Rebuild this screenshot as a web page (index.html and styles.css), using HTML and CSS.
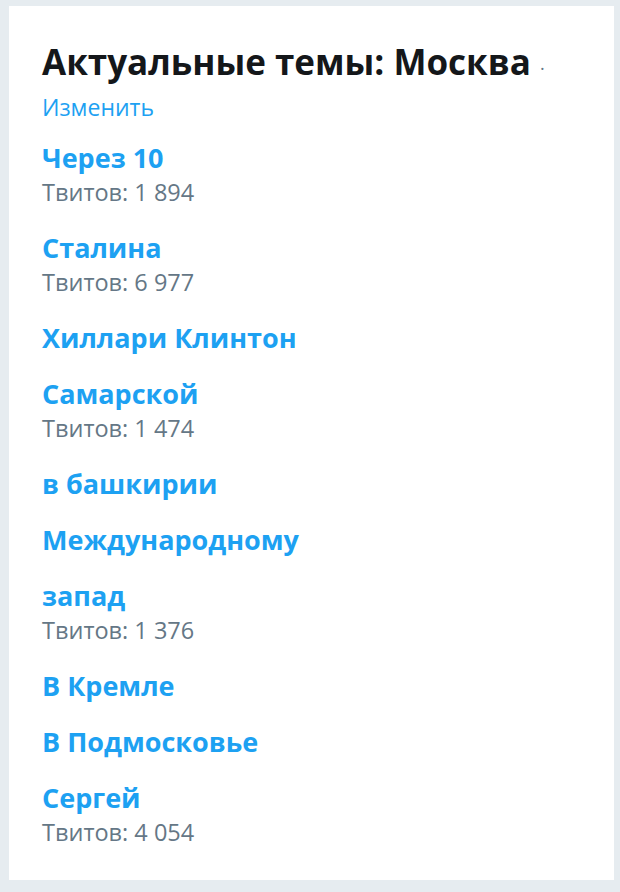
FILE: index.html
```html
<!DOCTYPE html>
<html>
<head>
    <title>Актуальные темы</title>
    <link rel="stylesheet" href="styles.css">
</head>
<body>
    <div class="trends">
        <div class="trends-header">
            <h3 class="trends-title">Актуальные темы: Москва <span class="dot">·</span></h3>
            <a class="change-link" href="#">Изменить</a>
        </div>
        <ul class="trend-list">
            <li class="trend">
                <a class="trend-name" href="#">Через 10</a>
                <div class="trend-count">Твитов: 1 894</div>
            </li>
            <li class="trend">
                <a class="trend-name" href="#">Сталина</a>
                <div class="trend-count">Твитов: 6 977</div>
            </li>
            <li class="trend">
                <a class="trend-name" href="#">Хиллари Клинтон</a>
            </li>
            <li class="trend">
                <a class="trend-name" href="#">Самарской</a>
                <div class="trend-count">Твитов: 1 474</div>
            </li>
            <li class="trend">
                <a class="trend-name" href="#">в башкирии</a>
            </li>
            <li class="trend">
                <a class="trend-name" href="#">Международному</a>
            </li>
            <li class="trend">
                <a class="trend-name" href="#">запад</a>
                <div class="trend-count">Твитов: 1 376</div>
            </li>
            <li class="trend">
                <a class="trend-name" href="#">В Кремле</a>
            </li>
            <li class="trend">
                <a class="trend-name" href="#">В Подмосковье</a>
            </li>
            <li class="trend">
                <a class="trend-name" href="#">Сергей</a>
                <div class="trend-count">Твитов: 4 054</div>
            </li>
        </ul>
    </div>
</body>
</html>
```

FILE: styles.css
```css
body {
    font-family: "Open Sans", "Noto Sans", Arial, sans-serif;
    background-color: #e6ecf0;
    margin: 0;
    padding: 6px 6px 12px 9px;
}
.trends {
    background-color: #fff;
    padding: 36px 20px 31px 33px;
}
.trends-header {
    display: flex;
    flex-direction: column;
    align-items: flex-start;
}
.trends-title {
    margin: 0;
    font-size: 35px;
    line-height: 40px;
    font-weight: 700;
    color: #14171a;
}
.dot {
    font-size: 18px;
    font-weight: 400;
    color: #657786;
}
.change-link {
    margin-top: 5px;
    font-size: 23px;
    line-height: 28px;
    color: #1da1f2;
    text-decoration: none;
}
.trend-list {
    list-style: none;
    margin: 0;
    padding: 0;
}
.trend {
    padding-top: 22px;
}
.trend:first-child {
    padding-top: 20px;
}
.trend-name {
    display: block;
    font-size: 27px;
    line-height: 34px;
    font-weight: 700;
    color: #1da1f2;
    text-decoration: none;
}
.trend-count {
    font-size: 23.5px;
    line-height: 34px;
    color: #657786;
}
```
